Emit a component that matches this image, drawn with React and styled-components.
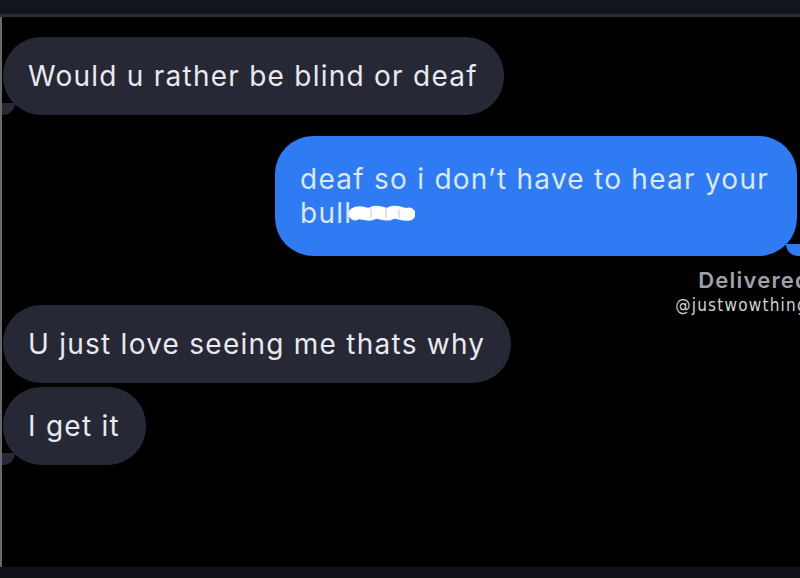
import React from 'react'
import styled, { createGlobalStyle } from 'styled-components'

const GlobalStyle = createGlobalStyle`
  html, body {
    margin: 0;
    padding: 0;
    background: #000;
  }
  body {
    font-family: Inter, "Liberation Sans", Arial, sans-serif;
  }
`

const Screen = styled.div`
  width: 800px;
  height: 578px;
  display: flex;
  flex-direction: column;
  background: #000;
  overflow: hidden;
`

const TopBar = styled.div`
  height: 14px;
  background: #12151b;
  border-bottom: 3px solid #2b2c31;
  flex-shrink: 0;
`

const Thread = styled.div`
  flex: 1;
  display: flex;
  flex-direction: column;
  align-items: flex-start;
  padding-top: 20px;
  border-left: 2px solid #6a6a6a;
  overflow: hidden;
`

const BottomBar = styled.div`
  height: 11px;
  background: #0f1217;
  flex-shrink: 0;
`

const Bubble = styled.div`
  position: relative;
  padding: ${p => (p.$sent ? '26px 28px 26px 25px' : '22px 26px 22px 25px')};
  margin-top: ${p => p.$gap || 0}px;
  align-self: ${p => (p.$sent ? 'flex-end' : 'flex-start')};
  margin-right: ${p => (p.$sent ? '3px' : '0')};
  margin-left: ${p => (p.$sent ? '0' : '1px')};
  border-radius: 38px;
  background: ${p => (p.$sent ? '#2e7bf3' : '#262835')};
  color: ${p => (p.$sent ? '#dbe8ff' : '#e9e9ef')};
  font-size: 28px;
  line-height: 34px;
  letter-spacing: 1.25px;
  white-space: nowrap;

  &::after {
    content: '';
    position: absolute;
    bottom: 0;
    ${p => (p.$sent ? 'right: -5px;' : 'left: -4px;')}
    width: 16px;
    height: 12px;
    background: ${p => (p.$sent ? '#2e7bf3' : '#262835')};
    border-radius: ${p => (p.$sent ? '0 0 0 14px' : '0 0 14px 0')};
    display: ${p => (p.$tail ? 'block' : 'none')};
  }
`

const Scribble = styled.svg`
  display: inline-block;
  vertical-align: -1px;
  margin-left: -3px;
`

const Status = styled.div`
  position: relative;
  align-self: flex-end;
  margin-top: 11px;
  margin-right: -10px;
  font-size: 22px;
  line-height: 26px;
  font-weight: 600;
  letter-spacing: 1.2px;
  color: #9ea0aa;
`

const Watermark = styled.div`
  position: absolute;
  top: 28px;
  left: -23px;
  font-family: "Liberation Sans Narrow", "DejaVu Sans Condensed", sans-serif;
  font-size: 17px;
  line-height: 20px;
  font-weight: 400;
  color: #d2d3d7;
  white-space: nowrap;
`

function Censor() {
  return (
    <Scribble width="66" height="20" viewBox="0 0 66 20">
      <path
        d="M6 10 C12 6, 18 13, 24 9 C30 6, 36 13, 42 9 C48 6, 54 12, 60 10"
        fill="none"
        stroke="#ffffff"
        strokeWidth="13"
        strokeLinecap="round"
      />
      <path d="M22 5 L22 14 M37 4 L37 14 M50 5 L50 14" stroke="#b8cdf2" strokeWidth="1.5" opacity="0.7" />
    </Scribble>
  )
}

export default function App() {
  return (
    <Screen>
      <GlobalStyle />
      <TopBar />
      <Thread>
        <Bubble $tail>Would u rather be blind or deaf</Bubble>
        <Bubble $sent $tail $gap={21}>
          deaf so i don’t have to hear your
          <br />
          bull<Censor />
        </Bubble>
        <Status>
          Delivered
          <Watermark>@justwowthings</Watermark>
        </Status>
        <Bubble $gap={12}>U just love seeing me thats why</Bubble>
        <Bubble $tail $gap={4}>I get it</Bubble>
      </Thread>
      <BottomBar />
    </Screen>
  )
}
